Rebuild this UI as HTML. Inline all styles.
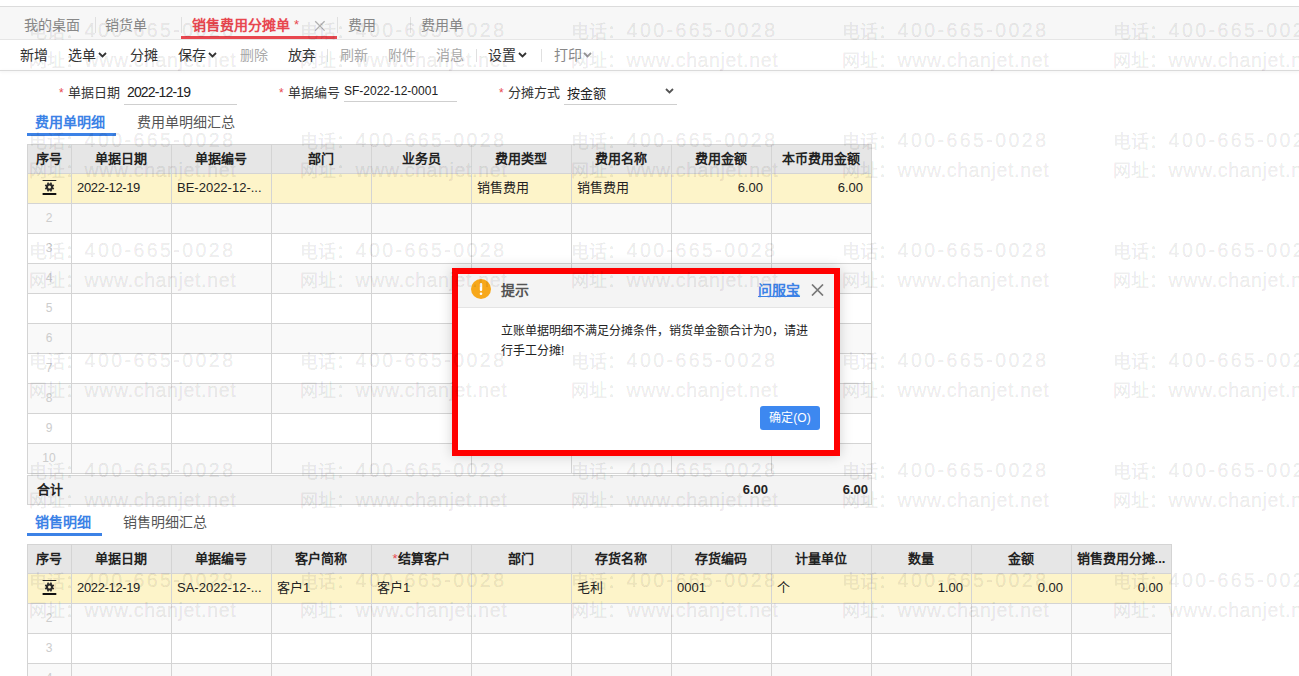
<!DOCTYPE html><html lang="zh-CN"><head><meta charset="utf-8"><style>
*{margin:0;padding:0;box-sizing:border-box}
html,body{width:1299px;height:676px;overflow:hidden;background:#fff;font-family:"Liberation Sans",sans-serif;color:#333}
.abs{position:absolute}
.t{position:absolute;white-space:nowrap;line-height:1}
.vl{position:absolute;width:1px;background:#d4d4d4}
.hl{position:absolute;height:1px;background:#d4d4d4}
.hdr{position:absolute;font-weight:bold;font-size:13px;color:#222;text-align:center;line-height:29px;white-space:nowrap}
.cell{position:absolute;font-size:13px;color:#222;line-height:30px;white-space:nowrap;overflow:hidden}
.num{position:absolute;font-size:12px;color:#cdcdcd;text-align:center;line-height:30px;width:44px}
.wm{position:absolute;font-size:18px;color:rgba(0,0,0,0.075);-webkit-text-stroke:0.5px rgba(0,0,0,0.075);white-space:nowrap;line-height:24px;height:24px}
.wc{font-size:18px}
.wd{font-size:19.5px;letter-spacing:2.45px;padding-left:2px;position:relative;top:-1px}
.wu{font-size:19.5px;letter-spacing:0.64px;padding-left:2px}
</style></head><body>
<div class="abs" style="left:0;top:6px;width:1299px;height:1px;background:#dcdcdc"></div>
<div class="abs" style="left:0;top:7px;width:1299px;height:33px;background:#f7f7f7"></div>
<div class="abs" style="left:0;top:39px;width:1299px;height:1px;background:#e6e6e6"></div>
<div class="t" style="left:24px;top:18px;font-size:14px;color:#888">我的桌面</div>
<div class="abs" style="left:95px;top:17px;width:1px;height:16px;background:#e0e0e0"></div>
<div class="t" style="left:105px;top:18px;font-size:14px;color:#888">销货单</div>
<div class="abs" style="left:181px;top:17px;width:1px;height:16px;background:#e0e0e0"></div>
<div class="t" style="left:192px;top:18px;font-size:14px;color:#e8474f;font-weight:bold">销售费用分摊单</div>
<div class="t" style="left:294px;top:18px;font-size:13px;color:#e8474f">*</div>
<svg class="abs" style="left:314px;top:20px" width="12" height="12" viewBox="0 0 12 12"><path d="M1.2 1.2 L10.6 10.6 M10.6 1.2 L1.2 10.6" stroke="#b0b0b0" stroke-width="1.3"/></svg>
<div class="abs" style="left:181px;top:36px;width:156px;height:3px;background:#e8474f"></div>
<div class="abs" style="left:337px;top:17px;width:1px;height:16px;background:#e0e0e0"></div>
<div class="t" style="left:348px;top:18px;font-size:14px;color:#888">费用</div>
<div class="abs" style="left:410px;top:17px;width:1px;height:16px;background:#e0e0e0"></div>
<div class="t" style="left:421px;top:18px;font-size:14px;color:#888">费用单</div>
<div class="abs" style="left:0;top:70px;width:1299px;height:1px;background:#dadada;box-shadow:0 1px 3px rgba(0,0,0,0.10)"></div>
<div class="t" style="left:20px;top:48px;font-size:14px;color:#333">新增</div>
<div class="t" style="left:68px;top:48px;font-size:14px;color:#333">选单</div>
<div class="t" style="left:130px;top:48px;font-size:14px;color:#333">分摊</div>
<div class="t" style="left:178px;top:48px;font-size:14px;color:#333">保存</div>
<div class="t" style="left:240px;top:48px;font-size:14px;color:#aaa">删除</div>
<div class="t" style="left:288px;top:48px;font-size:14px;color:#333">放弃</div>
<div class="t" style="left:340px;top:48px;font-size:14px;color:#aaa">刷新</div>
<div class="t" style="left:388px;top:48px;font-size:14px;color:#aaa">附件</div>
<div class="t" style="left:436px;top:48px;font-size:14px;color:#aaa">消息</div>
<div class="t" style="left:488px;top:48px;font-size:14px;color:#333">设置</div>
<div class="t" style="left:554px;top:48px;font-size:14px;color:#888">打印</div>
<svg class="abs" style="left:98px;top:52px" width="9" height="6" viewBox="0 0 9 6"><path d="M1 1 L4.5 4.5 L8 1" fill="none" stroke="#333" stroke-width="1.8"/></svg>
<svg class="abs" style="left:208px;top:52px" width="9" height="6" viewBox="0 0 9 6"><path d="M1 1 L4.5 4.5 L8 1" fill="none" stroke="#333" stroke-width="1.8"/></svg>
<svg class="abs" style="left:518px;top:52px" width="9" height="6" viewBox="0 0 9 6"><path d="M1 1 L4.5 4.5 L8 1" fill="none" stroke="#333" stroke-width="1.8"/></svg>
<svg class="abs" style="left:583px;top:52px" width="9" height="6" viewBox="0 0 9 6"><path d="M1 1 L4.5 4.5 L8 1" fill="none" stroke="#999" stroke-width="1.8"/></svg>
<div class="abs" style="left:327px;top:49px;width:1px;height:13px;background:#e0e0e0"></div>
<div class="abs" style="left:476px;top:49px;width:1px;height:13px;background:#e0e0e0"></div>
<div class="abs" style="left:541px;top:49px;width:1px;height:13px;background:#e0e0e0"></div>
<div class="t" style="left:59px;top:87px;font-size:12px;color:#e8474f">*</div>
<div class="t" style="left:68px;top:86px;font-size:13px;color:#333">单据日期</div>
<div class="t" style="left:127px;top:85px;font-size:14px;letter-spacing:-0.85px;color:#222">2022-12-19</div>
<div class="abs" style="left:124px;top:104px;width:113px;height:1px;background:#cfcfcf"></div>
<div class="t" style="left:279px;top:87px;font-size:12px;color:#e8474f">*</div>
<div class="t" style="left:288px;top:86px;font-size:13px;color:#333">单据编号</div>
<div class="t" style="left:344px;top:85px;font-size:12px;color:#222">SF-2022-12-0001</div>
<div class="abs" style="left:344px;top:101px;width:113px;height:1px;background:#cfcfcf"></div>
<div class="t" style="left:499px;top:87px;font-size:12px;color:#e8474f">*</div>
<div class="t" style="left:508px;top:86px;font-size:13px;color:#333">分摊方式</div>
<div class="t" style="left:567px;top:87px;font-size:13px;color:#222">按金额</div>
<div class="abs" style="left:564px;top:104px;width:113px;height:1px;background:#cfcfcf"></div>
<svg class="abs" style="left:665px;top:88px" width="9" height="6" viewBox="0 0 9 6"><path d="M1 1 L4.5 4.5 L8 1" fill="none" stroke="#555" stroke-width="1.8"/></svg>
<div class="t" style="left:35px;top:115px;font-size:14px;font-weight:bold;color:#3c82e6">费用单明细</div>
<div class="abs" style="left:27px;top:133px;width:89px;height:3px;background:#3c82e6"></div>
<div class="t" style="left:137px;top:115px;font-size:14px;color:#555">费用单明细汇总</div>
<div class="abs" style="left:27px;top:144px;width:844px;height:29px;background:#e6e6e6"></div>
<div class="abs" style="left:27px;top:173px;width:844px;height:30px;background:#fdf4c9"></div>
<div class="abs" style="left:27px;top:203px;width:844px;height:30px;background:#f9f9f9"></div>
<div class="abs" style="left:27px;top:233px;width:844px;height:30px;background:#ffffff"></div>
<div class="abs" style="left:27px;top:263px;width:844px;height:30px;background:#f9f9f9"></div>
<div class="abs" style="left:27px;top:293px;width:844px;height:30px;background:#ffffff"></div>
<div class="abs" style="left:27px;top:323px;width:844px;height:30px;background:#f9f9f9"></div>
<div class="abs" style="left:27px;top:353px;width:844px;height:30px;background:#ffffff"></div>
<div class="abs" style="left:27px;top:383px;width:844px;height:30px;background:#f9f9f9"></div>
<div class="abs" style="left:27px;top:413px;width:844px;height:30px;background:#ffffff"></div>
<div class="abs" style="left:27px;top:443px;width:844px;height:30px;background:#f9f9f9"></div>
<div class="vl" style="left:27px;top:144px;height:330px"></div>
<div class="vl" style="left:71px;top:144px;height:330px"></div>
<div class="vl" style="left:171px;top:144px;height:330px"></div>
<div class="vl" style="left:271px;top:144px;height:330px"></div>
<div class="vl" style="left:371px;top:144px;height:330px"></div>
<div class="vl" style="left:471px;top:144px;height:330px"></div>
<div class="vl" style="left:571px;top:144px;height:330px"></div>
<div class="vl" style="left:671px;top:144px;height:330px"></div>
<div class="vl" style="left:771px;top:144px;height:330px"></div>
<div class="vl" style="left:871px;top:144px;height:330px"></div>
<div class="hl" style="left:27px;top:144px;width:845px"></div>
<div class="hl" style="left:27px;top:173px;width:845px"></div>
<div class="hl" style="left:27px;top:203px;width:845px"></div>
<div class="hl" style="left:27px;top:233px;width:845px"></div>
<div class="hl" style="left:27px;top:263px;width:845px"></div>
<div class="hl" style="left:27px;top:293px;width:845px"></div>
<div class="hl" style="left:27px;top:323px;width:845px"></div>
<div class="hl" style="left:27px;top:353px;width:845px"></div>
<div class="hl" style="left:27px;top:383px;width:845px"></div>
<div class="hl" style="left:27px;top:413px;width:845px"></div>
<div class="hl" style="left:27px;top:443px;width:845px"></div>
<div class="hl" style="left:27px;top:473px;width:845px"></div>
<div class="hdr" style="left:27px;top:144px;width:44px">序号</div>
<div class="hdr" style="left:71px;top:144px;width:100px">单据日期</div>
<div class="hdr" style="left:171px;top:144px;width:100px">单据编号</div>
<div class="hdr" style="left:271px;top:144px;width:100px">部门</div>
<div class="hdr" style="left:371px;top:144px;width:100px">业务员</div>
<div class="hdr" style="left:471px;top:144px;width:100px">费用类型</div>
<div class="hdr" style="left:571px;top:144px;width:100px">费用名称</div>
<div class="hdr" style="left:671px;top:144px;width:100px">费用金额</div>
<div class="hdr" style="left:771px;top:144px;width:100px">本币费用金额</div>
<svg class="abs" style="left:42px;top:180px" width="15" height="16" viewBox="0 0 15 16"><rect x="0.6" y="0" width="13.7" height="1" fill="#222"/><g transform="translate(7.5 7)"><path fill-rule="evenodd" fill="#2a2a2a" d="M3.56 0.54 L4.68 1.08 L4.07 2.54 L2.90 2.14 L2.14 2.90 L2.54 4.07 L1.08 4.68 L0.54 3.56 L-0.54 3.56 L-1.08 4.68 L-2.54 4.07 L-2.14 2.90 L-2.90 2.14 L-4.07 2.54 L-4.68 1.08 L-3.56 0.54 L-3.56 -0.54 L-4.68 -1.08 L-4.07 -2.54 L-2.90 -2.14 L-2.14 -2.90 L-2.54 -4.07 L-1.08 -4.68 L-0.54 -3.56 L0.54 -3.56 L1.08 -4.68 L2.54 -4.07 L2.14 -2.90 L2.90 -2.14 L4.07 -2.54 L4.68 -1.08 L3.56 -0.54 Z M1.5 0 A1.5 1.5 0 1 0 -1.5 0 A1.5 1.5 0 1 0 1.5 0 Z"/></g><rect x="0.6" y="13" width="13.7" height="2" fill="#111"/></svg>
<div class="cell" style="left:77px;top:173px;width:92px"><span style="letter-spacing:-0.35px">2022-12-19</span></div>
<div class="cell" style="left:177px;top:173px;width:92px">BE-2022-12-...</div>
<div class="cell" style="left:477px;top:173px;width:92px">销售费用</div>
<div class="cell" style="left:577px;top:173px;width:92px">销售费用</div>
<div class="cell" style="left:671px;top:173px;width:92px;text-align:right">6.00</div>
<div class="cell" style="left:771px;top:173px;width:92px;text-align:right">6.00</div>
<div class="num" style="left:27px;top:203px">2</div>
<div class="num" style="left:27px;top:233px">3</div>
<div class="num" style="left:27px;top:263px">4</div>
<div class="num" style="left:27px;top:293px">5</div>
<div class="num" style="left:27px;top:323px">6</div>
<div class="num" style="left:27px;top:353px">7</div>
<div class="num" style="left:27px;top:383px">8</div>
<div class="num" style="left:27px;top:413px">9</div>
<div class="num" style="left:27px;top:443px">10</div>
<div class="abs" style="left:27px;top:475px;width:845px;height:30px;background:#f3f3f3;border:1px solid #d4d4d4"></div>
<div class="t" style="left:37px;top:483px;font-size:13px;font-weight:bold;color:#222">合计</div>
<div class="t" style="left:671px;top:483px;width:97px;text-align:right;font-size:13px;font-weight:bold;color:#222">6.00</div>
<div class="t" style="left:771px;top:483px;width:97px;text-align:right;font-size:13px;font-weight:bold;color:#222">6.00</div>
<div class="t" style="left:35px;top:515px;font-size:14px;font-weight:bold;color:#3c82e6">销售明细</div>
<div class="abs" style="left:27px;top:533px;width:75px;height:3px;background:#3c82e6"></div>
<div class="t" style="left:123px;top:515px;font-size:14px;color:#555">销售明细汇总</div>
<div class="abs" style="left:27px;top:544px;width:1144px;height:29px;background:#e6e6e6"></div>
<div class="abs" style="left:27px;top:573px;width:1144px;height:30px;background:#fdf4c9"></div>
<div class="abs" style="left:27px;top:603px;width:1144px;height:30px;background:#f9f9f9"></div>
<div class="abs" style="left:27px;top:633px;width:1144px;height:30px;background:#ffffff"></div>
<div class="abs" style="left:27px;top:663px;width:1144px;height:30px;background:#f9f9f9"></div>
<div class="vl" style="left:27px;top:544px;height:133px"></div>
<div class="vl" style="left:71px;top:544px;height:133px"></div>
<div class="vl" style="left:171px;top:544px;height:133px"></div>
<div class="vl" style="left:271px;top:544px;height:133px"></div>
<div class="vl" style="left:371px;top:544px;height:133px"></div>
<div class="vl" style="left:471px;top:544px;height:133px"></div>
<div class="vl" style="left:571px;top:544px;height:133px"></div>
<div class="vl" style="left:671px;top:544px;height:133px"></div>
<div class="vl" style="left:771px;top:544px;height:133px"></div>
<div class="vl" style="left:871px;top:544px;height:133px"></div>
<div class="vl" style="left:971px;top:544px;height:133px"></div>
<div class="vl" style="left:1071px;top:544px;height:133px"></div>
<div class="vl" style="left:1171px;top:544px;height:133px"></div>
<div class="hl" style="left:27px;top:544px;width:1145px"></div>
<div class="hl" style="left:27px;top:573px;width:1145px"></div>
<div class="hl" style="left:27px;top:603px;width:1145px"></div>
<div class="hl" style="left:27px;top:633px;width:1145px"></div>
<div class="hl" style="left:27px;top:663px;width:1145px"></div>
<div class="hdr" style="left:27px;top:544px;width:44px">序号</div>
<div class="hdr" style="left:71px;top:544px;width:100px">单据日期</div>
<div class="hdr" style="left:171px;top:544px;width:100px">单据编号</div>
<div class="hdr" style="left:271px;top:544px;width:100px">客户简称</div>
<div class="hdr" style="left:371px;top:544px;width:100px"><span style="color:#e8474f;font-weight:normal">*</span>结算客户</div>
<div class="hdr" style="left:471px;top:544px;width:100px">部门</div>
<div class="hdr" style="left:571px;top:544px;width:100px">存货名称</div>
<div class="hdr" style="left:671px;top:544px;width:100px">存货编码</div>
<div class="hdr" style="left:771px;top:544px;width:100px">计量单位</div>
<div class="hdr" style="left:871px;top:544px;width:100px">数量</div>
<div class="hdr" style="left:971px;top:544px;width:100px">金额</div>
<div class="hdr" style="left:1071px;top:544px;width:100px">销售费用分摊...</div>
<svg class="abs" style="left:42px;top:580px" width="15" height="16" viewBox="0 0 15 16"><rect x="0.6" y="0" width="13.7" height="1" fill="#222"/><g transform="translate(7.5 7)"><path fill-rule="evenodd" fill="#2a2a2a" d="M3.56 0.54 L4.68 1.08 L4.07 2.54 L2.90 2.14 L2.14 2.90 L2.54 4.07 L1.08 4.68 L0.54 3.56 L-0.54 3.56 L-1.08 4.68 L-2.54 4.07 L-2.14 2.90 L-2.90 2.14 L-4.07 2.54 L-4.68 1.08 L-3.56 0.54 L-3.56 -0.54 L-4.68 -1.08 L-4.07 -2.54 L-2.90 -2.14 L-2.14 -2.90 L-2.54 -4.07 L-1.08 -4.68 L-0.54 -3.56 L0.54 -3.56 L1.08 -4.68 L2.54 -4.07 L2.14 -2.90 L2.90 -2.14 L4.07 -2.54 L4.68 -1.08 L3.56 -0.54 Z M1.5 0 A1.5 1.5 0 1 0 -1.5 0 A1.5 1.5 0 1 0 1.5 0 Z"/></g><rect x="0.6" y="13" width="13.7" height="2" fill="#111"/></svg>
<div class="cell" style="left:77px;top:573px;width:92px"><span style="letter-spacing:-0.35px">2022-12-19</span></div>
<div class="cell" style="left:177px;top:573px;width:92px">SA-2022-12-...</div>
<div class="cell" style="left:277px;top:573px;width:92px">客户1</div>
<div class="cell" style="left:377px;top:573px;width:92px">客户1</div>
<div class="cell" style="left:577px;top:573px;width:92px">毛利</div>
<div class="cell" style="left:677px;top:573px;width:92px">0001</div>
<div class="cell" style="left:777px;top:573px;width:92px">个</div>
<div class="cell" style="left:871px;top:573px;width:92px;text-align:right">1.00</div>
<div class="cell" style="left:971px;top:573px;width:92px;text-align:right">0.00</div>
<div class="cell" style="left:1071px;top:573px;width:92px;text-align:right">0.00</div>
<div class="num" style="left:27px;top:603px">2</div>
<div class="num" style="left:27px;top:633px">3</div>
<div class="num" style="left:27px;top:663px">4</div>
<div class="abs" style="left:452px;top:268px;width:388px;height:188px;box-shadow:0 0 12px rgba(0,0,0,0.18)"></div>
<div class="abs" style="left:458px;top:274px;width:376px;height:176px;background:#fff"></div>
<div class="abs" style="left:458px;top:274px;width:376px;height:34px;background:#f4f4f4;border-bottom:1px solid #e4e4e4"></div>
<svg class="abs" style="left:471px;top:279px" width="20" height="20" viewBox="0 0 20 20"><circle cx="10" cy="10" r="10" fill="#f7a81b"/><rect x="8.8" y="4" width="2.4" height="8" rx="1" fill="#fff"/><circle cx="10" cy="14.8" r="1.3" fill="#fff"/></svg>
<div class="t" style="left:501px;top:283px;font-size:14px;font-weight:bold;color:#555">提示</div>
<div class="t" style="left:758px;top:283px;font-size:14px;font-weight:bold;color:#3c82e6;text-decoration:underline">问服宝</div>
<svg class="abs" style="left:811px;top:284px" width="13" height="12" viewBox="0 0 13 12"><path d="M1 0.5 L12 11.5 M12 0.5 L1 11.5" stroke="#777" stroke-width="1.7"/></svg>
<div class="abs" style="left:501px;top:321px;width:312px;font-size:12px;line-height:20px;color:#222">立账单据明细不满足分摊条件，销货单金额合计为0，请进行手工分摊!</div>
<div class="abs" style="left:760px;top:406px;width:60px;height:24px;background:#3d88f0;border-radius:3px;color:#fff;font-size:12px;line-height:24px;text-align:center">确定(O)</div>
<div class="abs" style="left:452px;top:268px;width:388px;height:188px;border:6px solid #ff0000"></div>
<div class="wm" style="left:28.6px;top:19.0px"><span class="wc">电话：</span><span class="wd">400-665-0028</span></div>
<div class="wm" style="left:28.6px;top:48.0px"><span class="wc">网址：</span><span class="wu">www.chanjet.net</span></div>
<div class="wm" style="left:299.6px;top:19.0px"><span class="wc">电话：</span><span class="wd">400-665-0028</span></div>
<div class="wm" style="left:299.6px;top:48.0px"><span class="wc">网址：</span><span class="wu">www.chanjet.net</span></div>
<div class="wm" style="left:570.6px;top:19.0px"><span class="wc">电话：</span><span class="wd">400-665-0028</span></div>
<div class="wm" style="left:570.6px;top:48.0px"><span class="wc">网址：</span><span class="wu">www.chanjet.net</span></div>
<div class="wm" style="left:841.6px;top:19.0px"><span class="wc">电话：</span><span class="wd">400-665-0028</span></div>
<div class="wm" style="left:841.6px;top:48.0px"><span class="wc">网址：</span><span class="wu">www.chanjet.net</span></div>
<div class="wm" style="left:1112.6px;top:19.0px"><span class="wc">电话：</span><span class="wd">400-665-0028</span></div>
<div class="wm" style="left:1112.6px;top:48.0px"><span class="wc">网址：</span><span class="wu">www.chanjet.net</span></div>
<div class="wm" style="left:28.6px;top:129.0px"><span class="wc">电话：</span><span class="wd">400-665-0028</span></div>
<div class="wm" style="left:28.6px;top:158.0px"><span class="wc">网址：</span><span class="wu">www.chanjet.net</span></div>
<div class="wm" style="left:299.6px;top:129.0px"><span class="wc">电话：</span><span class="wd">400-665-0028</span></div>
<div class="wm" style="left:299.6px;top:158.0px"><span class="wc">网址：</span><span class="wu">www.chanjet.net</span></div>
<div class="wm" style="left:570.6px;top:129.0px"><span class="wc">电话：</span><span class="wd">400-665-0028</span></div>
<div class="wm" style="left:570.6px;top:158.0px"><span class="wc">网址：</span><span class="wu">www.chanjet.net</span></div>
<div class="wm" style="left:841.6px;top:129.0px"><span class="wc">电话：</span><span class="wd">400-665-0028</span></div>
<div class="wm" style="left:841.6px;top:158.0px"><span class="wc">网址：</span><span class="wu">www.chanjet.net</span></div>
<div class="wm" style="left:1112.6px;top:129.0px"><span class="wc">电话：</span><span class="wd">400-665-0028</span></div>
<div class="wm" style="left:1112.6px;top:158.0px"><span class="wc">网址：</span><span class="wu">www.chanjet.net</span></div>
<div class="wm" style="left:28.6px;top:239.0px"><span class="wc">电话：</span><span class="wd">400-665-0028</span></div>
<div class="wm" style="left:28.6px;top:268.0px"><span class="wc">网址：</span><span class="wu">www.chanjet.net</span></div>
<div class="wm" style="left:299.6px;top:239.0px"><span class="wc">电话：</span><span class="wd">400-665-0028</span></div>
<div class="wm" style="left:299.6px;top:268.0px"><span class="wc">网址：</span><span class="wu">www.chanjet.net</span></div>
<div class="wm" style="left:570.6px;top:239.0px"><span class="wc">电话：</span><span class="wd">400-665-0028</span></div>
<div class="wm" style="left:570.6px;top:268.0px"><span class="wc">网址：</span><span class="wu">www.chanjet.net</span></div>
<div class="wm" style="left:841.6px;top:239.0px"><span class="wc">电话：</span><span class="wd">400-665-0028</span></div>
<div class="wm" style="left:841.6px;top:268.0px"><span class="wc">网址：</span><span class="wu">www.chanjet.net</span></div>
<div class="wm" style="left:1112.6px;top:239.0px"><span class="wc">电话：</span><span class="wd">400-665-0028</span></div>
<div class="wm" style="left:1112.6px;top:268.0px"><span class="wc">网址：</span><span class="wu">www.chanjet.net</span></div>
<div class="wm" style="left:28.6px;top:349.0px"><span class="wc">电话：</span><span class="wd">400-665-0028</span></div>
<div class="wm" style="left:28.6px;top:378.0px"><span class="wc">网址：</span><span class="wu">www.chanjet.net</span></div>
<div class="wm" style="left:299.6px;top:349.0px"><span class="wc">电话：</span><span class="wd">400-665-0028</span></div>
<div class="wm" style="left:299.6px;top:378.0px"><span class="wc">网址：</span><span class="wu">www.chanjet.net</span></div>
<div class="wm" style="left:570.6px;top:349.0px"><span class="wc">电话：</span><span class="wd">400-665-0028</span></div>
<div class="wm" style="left:570.6px;top:378.0px"><span class="wc">网址：</span><span class="wu">www.chanjet.net</span></div>
<div class="wm" style="left:841.6px;top:349.0px"><span class="wc">电话：</span><span class="wd">400-665-0028</span></div>
<div class="wm" style="left:841.6px;top:378.0px"><span class="wc">网址：</span><span class="wu">www.chanjet.net</span></div>
<div class="wm" style="left:1112.6px;top:349.0px"><span class="wc">电话：</span><span class="wd">400-665-0028</span></div>
<div class="wm" style="left:1112.6px;top:378.0px"><span class="wc">网址：</span><span class="wu">www.chanjet.net</span></div>
<div class="wm" style="left:28.6px;top:459.0px"><span class="wc">电话：</span><span class="wd">400-665-0028</span></div>
<div class="wm" style="left:28.6px;top:488.0px"><span class="wc">网址：</span><span class="wu">www.chanjet.net</span></div>
<div class="wm" style="left:299.6px;top:459.0px"><span class="wc">电话：</span><span class="wd">400-665-0028</span></div>
<div class="wm" style="left:299.6px;top:488.0px"><span class="wc">网址：</span><span class="wu">www.chanjet.net</span></div>
<div class="wm" style="left:570.6px;top:459.0px"><span class="wc">电话：</span><span class="wd">400-665-0028</span></div>
<div class="wm" style="left:570.6px;top:488.0px"><span class="wc">网址：</span><span class="wu">www.chanjet.net</span></div>
<div class="wm" style="left:841.6px;top:459.0px"><span class="wc">电话：</span><span class="wd">400-665-0028</span></div>
<div class="wm" style="left:841.6px;top:488.0px"><span class="wc">网址：</span><span class="wu">www.chanjet.net</span></div>
<div class="wm" style="left:1112.6px;top:459.0px"><span class="wc">电话：</span><span class="wd">400-665-0028</span></div>
<div class="wm" style="left:1112.6px;top:488.0px"><span class="wc">网址：</span><span class="wu">www.chanjet.net</span></div>
<div class="wm" style="left:28.6px;top:569.0px"><span class="wc">电话：</span><span class="wd">400-665-0028</span></div>
<div class="wm" style="left:28.6px;top:598.0px"><span class="wc">网址：</span><span class="wu">www.chanjet.net</span></div>
<div class="wm" style="left:299.6px;top:569.0px"><span class="wc">电话：</span><span class="wd">400-665-0028</span></div>
<div class="wm" style="left:299.6px;top:598.0px"><span class="wc">网址：</span><span class="wu">www.chanjet.net</span></div>
<div class="wm" style="left:570.6px;top:569.0px"><span class="wc">电话：</span><span class="wd">400-665-0028</span></div>
<div class="wm" style="left:570.6px;top:598.0px"><span class="wc">网址：</span><span class="wu">www.chanjet.net</span></div>
<div class="wm" style="left:841.6px;top:569.0px"><span class="wc">电话：</span><span class="wd">400-665-0028</span></div>
<div class="wm" style="left:841.6px;top:598.0px"><span class="wc">网址：</span><span class="wu">www.chanjet.net</span></div>
<div class="wm" style="left:1112.6px;top:569.0px"><span class="wc">电话：</span><span class="wd">400-665-0028</span></div>
<div class="wm" style="left:1112.6px;top:598.0px"><span class="wc">网址：</span><span class="wu">www.chanjet.net</span></div>
<div class="wm" style="left:28.6px;top:679.0px"><span class="wc">电话：</span><span class="wd">400-665-0028</span></div>
<div class="wm" style="left:28.6px;top:708.0px"><span class="wc">网址：</span><span class="wu">www.chanjet.net</span></div>
<div class="wm" style="left:299.6px;top:679.0px"><span class="wc">电话：</span><span class="wd">400-665-0028</span></div>
<div class="wm" style="left:299.6px;top:708.0px"><span class="wc">网址：</span><span class="wu">www.chanjet.net</span></div>
<div class="wm" style="left:570.6px;top:679.0px"><span class="wc">电话：</span><span class="wd">400-665-0028</span></div>
<div class="wm" style="left:570.6px;top:708.0px"><span class="wc">网址：</span><span class="wu">www.chanjet.net</span></div>
<div class="wm" style="left:841.6px;top:679.0px"><span class="wc">电话：</span><span class="wd">400-665-0028</span></div>
<div class="wm" style="left:841.6px;top:708.0px"><span class="wc">网址：</span><span class="wu">www.chanjet.net</span></div>
<div class="wm" style="left:1112.6px;top:679.0px"><span class="wc">电话：</span><span class="wd">400-665-0028</span></div>
<div class="wm" style="left:1112.6px;top:708.0px"><span class="wc">网址：</span><span class="wu">www.chanjet.net</span></div>
</body></html>
